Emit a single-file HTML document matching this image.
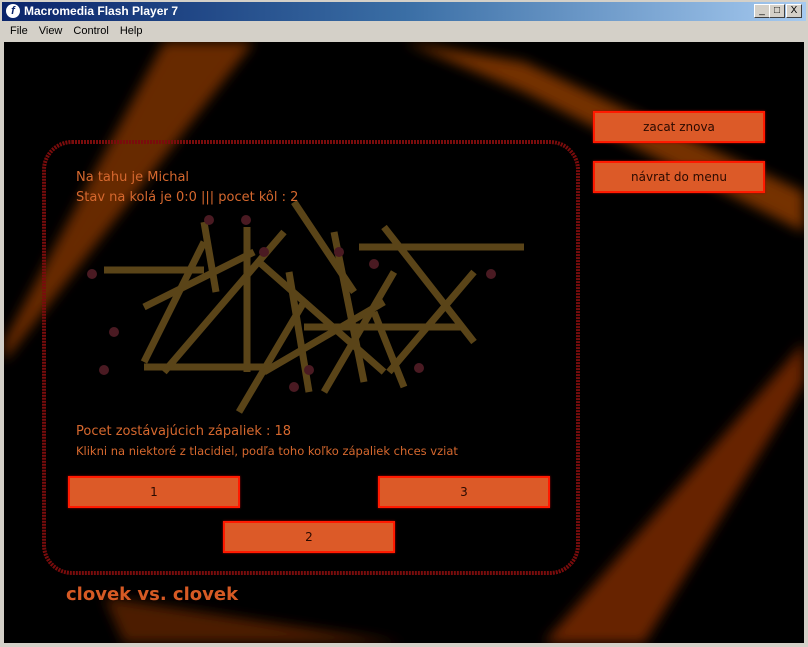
<!DOCTYPE html>
<html><head><style>
body{margin:0;width:808px;height:647px;background:#d4d0c8;position:relative;overflow:hidden;font-family:"Liberation Sans",sans-serif}
.title{position:absolute;left:2px;top:2px;width:804px;height:19px;background:linear-gradient(90deg,#0a246a,#3a6ea5 50%,#a6caf0);color:#fff;font-weight:bold;font-size:12px;line-height:19px}
.title span{position:absolute;left:22px}
.logo{position:absolute;left:4px;top:2px;width:14px;height:14px;border-radius:50%;background:#fff;color:#0a246a;font-size:11px;text-align:center;line-height:14px;font-style:italic}
.wb{position:absolute;top:4px;width:14px;height:12px;background:#d4d0c8;border:1px solid;border-color:#fff #404040 #404040 #fff;font-size:10px;line-height:12px;text-align:center;color:#000}
.menu{position:absolute;left:10px;top:25px;font-size:11px;color:#000}
.menu span{margin-right:11px}
.stage{position:absolute;left:4px;top:42px;width:800px;height:601px;background:#000;overflow:hidden}
.t{position:absolute;color:#d6682e;font-family:"DejaVu Sans",sans-serif;font-size:13px}
.btn{position:absolute;background:#dc5a28;border:2px solid #ff1a00;box-shadow:0 0 2px #a00;color:#2a0a00;font-family:"DejaVu Sans",sans-serif;font-size:12px;text-align:center}
</style></head><body>
<div class="title"><div class="logo">f</div><span>Macromedia Flash Player 7</span></div>
<div class="wb" style="left:754px">_</div><div class="wb" style="left:769px">□</div><div class="wb" style="left:786px">X</div>
<div class="menu"><span>File</span><span>View</span><span>Control</span><span>Help</span></div>
<div class="stage">
<svg width="800" height="601" style="position:absolute;left:0;top:0">
<defs>
<filter id="b"><feGaussianBlur stdDeviation="6"/></filter>
</defs>
<g filter="url(#b)" opacity=".85">
<polygon points="0,300 160,0 250,0 0,320" fill="#7a3000"/>
<polygon points="400,0 520,20 800,150 800,190 520,50" fill="#8a3a00"/>
<polygon points="800,300 800,340 640,601 540,601" fill="#7a2c00"/>
<polygon points="100,555 400,601 120,601" fill="#5a2200"/>
</g>
<rect x="40" y="100" width="534" height="431" rx="28" fill="none" stroke="#7a0c0c" stroke-width="4" stroke-dasharray="2 1"/>
<g stroke-linecap="butt" stroke="#5a4418" stroke-width="7">
<line x1="100" y1="228" x2="200" y2="228"/>
<line x1="140" y1="325" x2="260" y2="325"/>
<line x1="355" y1="205" x2="520" y2="205"/>
<line x1="300" y1="285" x2="460" y2="285"/>
<line x1="140" y1="265" x2="250" y2="210"/>
<line x1="140" y1="320" x2="200" y2="200"/>
<line x1="160" y1="330" x2="280" y2="190"/>
<line x1="212" y1="250" x2="200" y2="180"/>
<line x1="243" y1="185" x2="243" y2="330"/>
<line x1="255" y1="220" x2="380" y2="330"/>
<line x1="285" y1="230" x2="305" y2="350"/>
<line x1="235" y1="370" x2="300" y2="260"/>
<line x1="260" y1="330" x2="380" y2="260"/>
<line x1="290" y1="160" x2="350" y2="250"/>
<line x1="330" y1="190" x2="360" y2="340"/>
<line x1="320" y1="350" x2="390" y2="230"/>
<line x1="370" y1="270" x2="400" y2="345"/>
<line x1="380" y1="185" x2="470" y2="300"/>
<line x1="385" y1="330" x2="470" y2="230"/>
</g>
<g fill="#4a1a22">
<circle cx="88" cy="232" r="5"/><circle cx="110" cy="290" r="5"/><circle cx="100" cy="328" r="5"/>
<circle cx="205" cy="178" r="5"/><circle cx="242" cy="178" r="5"/><circle cx="260" cy="210" r="5"/>
<circle cx="335" cy="210" r="5"/><circle cx="370" cy="222" r="5"/><circle cx="487" cy="232" r="5"/>
<circle cx="290" cy="345" r="5"/><circle cx="415" cy="326" r="5"/><circle cx="305" cy="328" r="5"/>
</g>
</svg>
<div class="t" style="left:72px;top:128px">Na tahu je Michal</div>
<div class="t" style="left:72px;top:148px">Stav na kolá je 0:0 ||| pocet kôl : 2</div>
<div class="t" style="left:72px;top:382px">Pocet zostávajúcich zápaliek : 18</div>
<div class="t" style="left:72px;top:402px;font-size:11.5px">Klikni na niektoré z tlacidiel, podľa toho koľko zápaliek chces vziat</div>
<div class="btn" style="left:64px;top:434px;width:168px;height:28px;line-height:28px">1</div>
<div class="btn" style="left:374px;top:434px;width:168px;height:28px;line-height:28px">3</div>
<div class="btn" style="left:219px;top:479px;width:168px;height:28px;line-height:28px">2</div>
<div class="btn" style="left:589px;top:69px;width:168px;height:28px;line-height:28px">zacat znova</div>
<div class="btn" style="left:589px;top:119px;width:168px;height:28px;line-height:28px">návrat do menu</div>
<div class="t" style="left:62px;top:542px;font-size:18px;font-weight:bold;color:#d65a24">clovek vs. clovek</div>
</div>
</body></html>
